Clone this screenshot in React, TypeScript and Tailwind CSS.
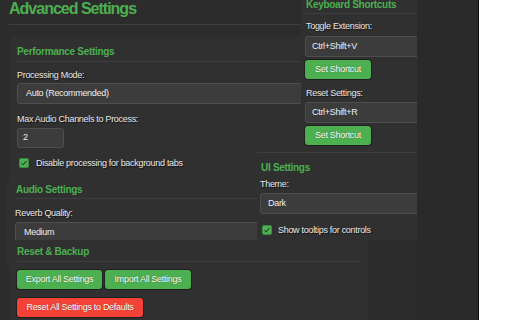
import React from "react";

const label = "text-[9px] leading-[11px] tracking-[-0.3px] text-[#e8e8e8] [text-shadow:1px_1px_1px_rgba(0,0,0,0.6)]";
const title = "text-[10px] leading-[12px] font-bold tracking-[-0.3px] text-[#4caf50]";
const field =
  "rounded-[3px] border border-[#4e4e4e] bg-[#3c3c3c] text-[9px] tracking-[-0.3px] text-[#eeeeee] flex items-center";
const greenBtn =
  "h-[19px] rounded-[3px] bg-[#4caf50] text-white text-[9px] tracking-[-0.3px] shadow-[0_0_0_1px_rgba(0,0,0,0.35)] flex items-center justify-center [text-shadow:0_0_1px_rgba(0,0,0,0.5)]";

function Checkbox() {
  return (
    <span className="flex h-[10px] w-[10px] shrink-0 items-center justify-center rounded-[2px] border border-[#3d8b40] bg-[#4caf50]">
      <svg viewBox="0 0 10 10" className="h-[8px] w-[8px]">
        <polyline points="2,5.2 4,7.4 8,2.4" fill="none" stroke="#1c1c1c" strokeWidth="1.2" />
      </svg>
    </span>
  );
}

export default function App() {
  return (
    <div className="flex h-[320px] w-[512px] overflow-hidden bg-white font-['Liberation_Sans',Arial,sans-serif]">
      <div className="relative h-full w-[479px] shrink-0 overflow-hidden border-r border-[#0d0d0d] bg-[#2a2a2a]">
        {/* main column */}
        <div className="h-full w-[417px] bg-[#2c2c2c] px-[9px]">
          <div className="h-[25px] w-[359px] border-b border-[#404040]">
            <h1 className="pt-[1px] text-[16px] font-bold leading-[16px] tracking-[-1px] text-[#4caf50]">
              Advanced Settings
            </h1>
          </div>

          <div className="mt-[12px] w-[359px] rounded-[5px] bg-[#303030] px-[8px] pt-[9px]">
            {/* Performance */}
            <div className={`${title} border-b border-[#3d3d3d] pb-[3px]`}>Performance Settings</div>
            <div className={`${label} mt-[8px]`}>Processing Mode:</div>
            <div className={`${field} mt-[2px] h-[21px] pl-[8px]`}>Auto (Recommended)</div>
            <div className={`${label} mt-[10px]`}>Max Audio Channels to Process:</div>
            <div className={`${field} mt-[3px] h-[20px] w-[47px] pl-[5px]`}>2</div>
            <div className="mt-[10px] flex h-[10px] items-center gap-[7px] pl-[2px]">
              <Checkbox />
              <span className={label}>Disable processing for background tabs</span>
            </div>

            {/* Audio */}
            <div className="mt-[13px] -ml-[11px] h-[85px] overflow-hidden rounded-[5px] bg-[#303030] pl-[9px] pt-[3px]">
              <div className={`${title} border-b border-[#3d3d3d] pb-[2px] pl-[1px]`}>Audio Settings</div>
              <div className={`${label} mt-[9px]`}>Reverb Quality:</div>
              <div className={`${field} mt-[3px] h-[21px] pl-[8px]`}>Medium</div>
            </div>

            {/* Reset & Backup */}
            <div className="relative z-10 -mx-[8px] -mt-[26px] h-[90px] bg-[#303030] px-[8px] pt-[6px]">
              <div className={`${title} border-b border-[#3d3d3d] pb-[3px]`}>Reset &amp; Backup</div>
              <div className="mt-[8px] flex gap-[3px]">
                <button className={`${greenBtn} w-[85px]`}>Export All Settings</button>
                <button className={`${greenBtn} w-[86px]`}>Import All Settings</button>
              </div>
              <button
                className={`${greenBtn} mt-[9px] w-[126px] bg-[#f44336]`}
              >
                Reset All Settings to Defaults
              </button>
            </div>
          </div>
        </div>

        {/* Keyboard shortcuts panel */}
        <div className="absolute left-[301px] top-[-1px] z-20 h-[153px] w-[116px] overflow-hidden bg-[#303030] pl-[4px]">
          <div className={`${title} border-b border-[#3d3d3d] pb-[2px] pl-[1px]`}>Keyboard Shortcuts</div>
          <div className={`${label} mt-[7px] pl-[1px]`}>Toggle Extension:</div>
          <div className={`${field} mt-[4px] h-[21px] w-[140px] pl-[6px]`}>Ctrl+Shift+V</div>
          <button className={`${greenBtn} mt-[3px] w-[66px]`}>Set Shortcut</button>
          <div className={`${label} mt-[9px] pl-[1px]`}>Reset Settings:</div>
          <div className={`${field} mt-[3px] h-[21px] w-[140px] pl-[6px]`}>Ctrl+Shift+R</div>
          <button className={`${greenBtn} mt-[3px] w-[66px]`}>Set Shortcut</button>
        </div>

        {/* UI settings panel */}
        <div className="absolute left-[257px] top-[152px] z-20 h-[88px] w-[160px] overflow-hidden border-t border-[#3d3d3d] bg-[#303030] pl-[3px] pt-[9px]">
          <div className={`${title} pl-[1px]`}>UI Settings</div>
          <div className={`${label} mt-[5px]`}>Theme:</div>
          <div className={`${field} mt-[3px] h-[21px] w-[190px] pl-[7px]`}>Dark</div>
          <div className="mt-[11px] flex h-[10px] items-center gap-[6px] pl-[2px]">
            <Checkbox />
            <span className={label}>Show tooltips for controls</span>
          </div>
        </div>
      </div>
      <div className="flex-1 bg-white" />
    </div>
  );
}
